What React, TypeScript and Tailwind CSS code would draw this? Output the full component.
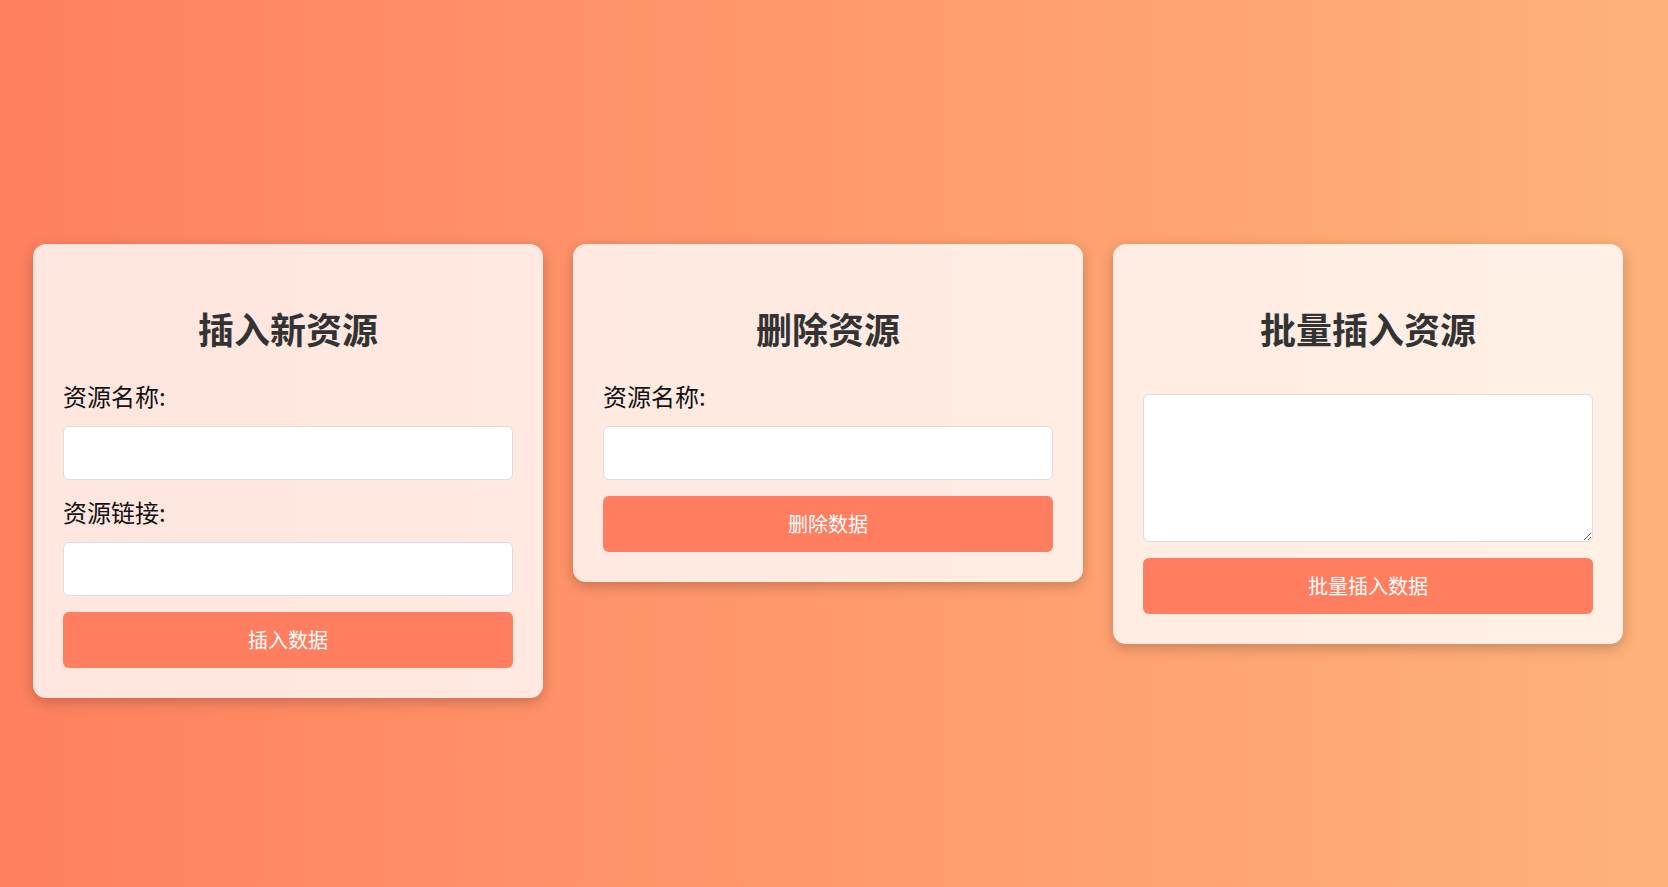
import React from "react";

const font = { fontFamily: '"Noto Sans CJK SC", "Noto Sans", sans-serif' };

const Field = ({ label }: { label: string }) => (
  <div>
    <label className="block text-[24px] leading-[32px] text-[#111] mb-[14px]">{label}</label>
    <input
      type="text"
      className="block w-full h-[54px] bg-white border border-[#dddddd] rounded-[6px] px-3 outline-none mb-[16px]"
    />
  </div>
);

const Button = ({ children }: { children: React.ReactNode }) => (
  <button className="block w-full h-[56px] bg-[#ff7e5f] text-white text-[20px] rounded-[6px] cursor-pointer">
    {children}
  </button>
);

const Card = ({ title, children }: { title: string; children: React.ReactNode }) => (
  <div className="w-[510px] shrink-0 bg-white/80 rounded-[13px] shadow-[0_4px_14px_rgba(0,0,0,0.22)] p-[30px]">
    <h2 className="text-center text-[36px] leading-[44px] font-bold text-[#333] mt-[32px] mb-[30px]">{title}</h2>
    {children}
  </div>
);

export default function App() {
  return (
    <div
      className="min-h-screen w-full bg-gradient-to-r from-[#ff805f] to-[#feb27a] pt-[244px] pl-[33px]"
      style={font}
    >
      <div className="flex items-start gap-[30px]">
        <Card title="插入新资源">
          <Field label="资源名称:" />
          <Field label="资源链接:" />
          <Button>插入数据</Button>
        </Card>
        <Card title="删除资源">
          <Field label="资源名称:" />
          <Button>删除数据</Button>
        </Card>
        <Card title="批量插入资源">
          <textarea className="block w-full h-[148px] bg-white border border-[#dddddd] rounded-[6px] p-3 outline-none mt-[44px] mb-[16px]" />
          <Button>批量插入数据</Button>
        </Card>
      </div>
    </div>
  );
}
